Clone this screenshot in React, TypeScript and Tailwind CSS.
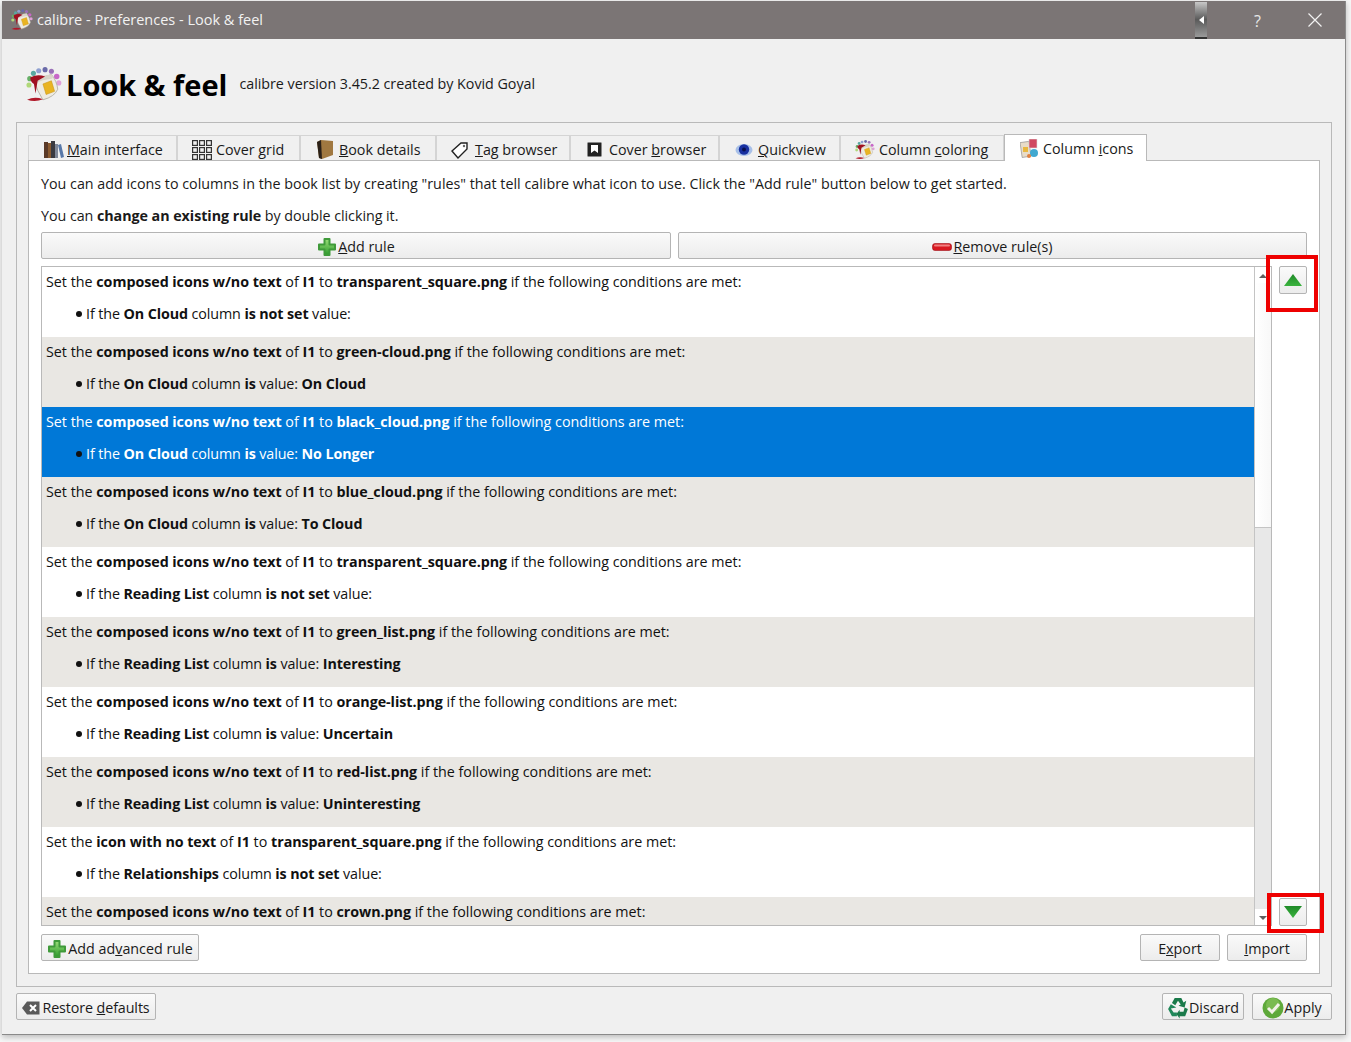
import React from "react";

const Logo = ({ s = 34 }: { s?: number }) => (
  <svg width={s} height={s} viewBox="0 0 34 34" className="shrink-0">
    <circle cx="12" cy="3.5" r="2.4" fill="#8fa0d0" />
    <circle cx="18" cy="2.5" r="2.4" fill="#6a6aa8" />
    <circle cx="24" cy="4" r="2.4" fill="#9a70b8" />
    <circle cx="29" cy="9" r="2.6" fill="#c868c8" />
    <circle cx="31" cy="15" r="2.4" fill="#e0a0d8" />
    <circle cx="7" cy="6" r="2.4" fill="#58a8a0" />
    <circle cx="3.5" cy="11" r="2.4" fill="#68b068" />
    <circle cx="2.8" cy="17" r="2.4" fill="#b0d878" />
    <path d="M8 13 L24 7 Q29 13 30 21 Q27 28 16 31 Q10 22 8 13Z" fill="#eeebe2" stroke="#b0aca0" strokeWidth="0.8" />
    <path d="M8 13 Q15 7 24 7 Q27 10 24 11 Q15 12 10 15Z" fill="#d8d4c8" />
    <path d="M16 16 L24 13 L27 23 L19 26Z" fill="#e9b422" stroke="#c89010" strokeWidth="0.5" />
    <path d="M4 10 Q11 6 18 9 L11 13 L9 25 L7.5 16 Q4 14 4 10Z" fill="#a01020" />
    <path d="M1 31 Q8 27.5 16 30.5 Q9 33.5 1 31Z" fill="#b01828" />
  </svg>
);

const Books = () => (
  <svg width="20" height="18" viewBox="0 0 20 18" className="shrink-0">
    <rect x="0" y="1" width="4" height="16" fill="#5a3a28" />
    <rect x="4" y="2" width="3" height="15" fill="#8a5a30" />
    <rect x="7" y="0" width="4" height="17" fill="#3a3a40" />
    <rect x="11" y="3" width="3" height="14" fill="#808898" />
    <path d="M14 4 L17 3 L20 16 L17 17Z" fill="#5878a8" />
  </svg>
);

const Grid = () => (
  <svg width="20" height="20" viewBox="0 0 20 20" className="shrink-0" fill="none" stroke="#333" strokeWidth="1.2">
    {[0, 7, 14].flatMap((y) =>
      [0, 7, 14].map((x) => <rect key={`${x}-${y}`} x={x + 0.6} y={y + 0.6} width="4.8" height="4.8" />)
    )}
  </svg>
);

const BookIcon = () => (
  <svg width="18" height="20" viewBox="0 0 18 20" className="shrink-0">
    <path d="M1 2 L5 0 L17 1 L17 15 L6 19 L3 18Z" fill="#a07840" />
    <path d="M1 2 L5 0 L6 19 L3 18Z" fill="#2a2018" />
  </svg>
);

const Tag = () => (
  <svg width="18" height="18" viewBox="0 0 18 18" className="shrink-0">
    <path d="M1 10 L10 2 L16 2 L16 8 L7 17Z" fill="#fff" stroke="#222" strokeWidth="1.4" />
    <circle cx="13" cy="5" r="1.2" fill="#666" />
  </svg>
);

const CoverIcon = () => (
  <svg width="16" height="16" viewBox="0 0 16 16" className="shrink-0">
    <rect x="0.5" y="0.5" width="14" height="14" rx="1" fill="#222" stroke="#888" />
    <path d="M4 3 H11 V11 L7.5 8.5 L4 11Z" fill="#fff" />
  </svg>
);

const Eye = () => (
  <svg width="18" height="16" viewBox="0 0 18 16" className="shrink-0">
    <ellipse cx="9" cy="8" rx="8.5" ry="6" fill="#a8c0e8" />
    <circle cx="9" cy="7.5" r="5.2" fill="#1830a0" />
    <circle cx="9" cy="7.5" r="2" fill="#081050" />
  </svg>
);

const ColumnIcons = () => (
  <svg width="20" height="20" viewBox="0 0 20 20" className="shrink-0">
    <rect x="1" y="3" width="9" height="15" fill="#e8dcc8" stroke="#888" strokeWidth="0.6" transform="rotate(-8 5 10)" />
    <rect x="3" y="8" width="5" height="5" fill="#e8b840" />
    <rect x="9" y="0" width="8" height="9" fill="#d04860" stroke="#ddd" strokeWidth="0.6" />
    <circle cx="14" cy="14" r="4" fill="#40a8d0" />
    <circle cx="9" cy="17" r="2" fill="#e08040" />
  </svg>
);

const Plus = () => (
  <svg width="20" height="20" viewBox="0 0 20 20" className="shrink-0">
    <defs>
      <linearGradient id="pg" x1="0" y1="0" x2="0" y2="1">
        <stop offset="0" stopColor="#9ade78" />
        <stop offset="1" stopColor="#2c9a2c" />
      </linearGradient>
    </defs>
    <path d="M7.5 2 H12.5 V7.5 H18 V12.5 H12.5 V18 H7.5 V12.5 H2 V7.5 H7.5Z" fill="url(#pg)" stroke="#3f9a3a" strokeWidth="2" strokeLinejoin="round" />
  </svg>
);

const Minus = () => (
  <svg width="20" height="8" viewBox="0 0 20 8" className="shrink-0">
    <rect x="0.5" y="0.5" width="19" height="7" rx="2.5" fill="#d81820" stroke="#a01018" strokeWidth="0.6" />
    <rect x="2" y="1.5" width="16" height="2" rx="1" fill="#f08080" />
  </svg>
);

const Arrow = ({ up }: { up?: boolean }) => (
  <svg width="18" height="12" viewBox="0 0 18 12">
    <defs>
      <linearGradient id="au" x1="0" y1="0" x2="0" y2="1">
        <stop offset="0" stopColor="#1f8a28" />
        <stop offset="1" stopColor="#3bb43f" />
      </linearGradient>
    </defs>
    <path d={up ? "M9 0 L18 12 H0Z" : "M0 0 H18 L9 12Z"} fill="url(#au)" />
  </svg>
);

const Recycle = () => (
  <svg width="22" height="22" viewBox="0 0 20 20" className="shrink-0">
    <path d="M7 1 H13 L15 5 L17.5 3.5 L16 9.5 L10.5 8 L12.5 6.8 L10 3.5 L7.5 7.5 L4.5 5.5Z" fill="#1a7a4a" />
    <path d="M1 11 L3.5 6.5 L8.5 9.5 L3.5 10.5 L6 14 H9 V17.5 H4.5Z" fill="#20885a" />
    <path d="M19 11 L16.5 17.5 H11.5 V19.5 L8.5 15.5 L11.5 11.5 V13.5 H15 L16 9.5Z" fill="#1a7a4a" />
  </svg>
);

const Check = () => (
  <svg width="22" height="22" viewBox="0 0 22 22" className="shrink-0">
    <circle cx="11" cy="11" r="10.5" fill="#5ea83a" />
    <circle cx="11" cy="8" r="7" fill="#8ec860" opacity="0.6" />
    <path d="M6 11 L10 15 L17 7" fill="none" stroke="#f2f2e8" strokeWidth="3" />
  </svg>
);

const Backspace = () => (
  <svg width="18" height="14" viewBox="0 0 18 14" className="shrink-0">
    <path d="M5 0.5 H17.5 V13.5 H5 L0 7Z" fill="#5a5a5a" />
    <path d="M8 4 L14 10 M14 4 L8 10" stroke="#fff" strokeWidth="2" />
  </svg>
);

const Btn = ({ className = "", children }: { className?: string; children: React.ReactNode }) => (
  <div className={`flex items-center justify-center whitespace-nowrap rounded-[2px] border border-[#b4b4b4] bg-gradient-to-b from-[#fafafa] to-[#ececec] pt-[2px] text-[14.3px] text-[#1a1a1a] ${className}`}>
    {children}
  </div>
);

type TabDef = { icon: React.ReactNode; w: string; gap: string; label: React.ReactNode };
const tabs: TabDef[] = [
  { icon: <Books />, w: "w-[149px]", gap: "gap-[3px] pl-[15px]", label: <><u>M</u>ain interface</> },
  { icon: <Grid />, w: "w-[123px]", gap: "gap-[4px] pl-[14px]", label: <>Cover <u>g</u>rid</> },
  { icon: <BookIcon />, w: "w-[136px]", gap: "gap-[5px] pl-[15px]", label: <><u>B</u>ook details</> },
  { icon: <Tag />, w: "w-[134px]", gap: "gap-[6px] pl-[14px]", label: <><u>T</u>ag browser</> },
  { icon: <CoverIcon />, w: "w-[149px]", gap: "gap-[6px] pl-[16px]", label: <>Cover <u>b</u>rowser</> },
  { icon: <Eye />, w: "w-[121px]", gap: "gap-[5px] pl-[15px]", label: <><u>Q</u>uickview</> },
  { icon: <Logo s={20} />, w: "w-[164px]", gap: "gap-[4px] pl-[14px]", label: <>Column <u>c</u>oloring</> },
];

type Row = { kind: string; file: string; col?: string; cond?: string; val?: string };
const rows: Row[] = [
  { kind: "composed icons w/no text", file: "transparent_square.png", col: "On Cloud", cond: "is not set" },
  { kind: "composed icons w/no text", file: "green-cloud.png", col: "On Cloud", cond: "is", val: "On Cloud" },
  { kind: "composed icons w/no text", file: "black_cloud.png", col: "On Cloud", cond: "is", val: "No Longer" },
  { kind: "composed icons w/no text", file: "blue_cloud.png", col: "On Cloud", cond: "is", val: "To Cloud" },
  { kind: "composed icons w/no text", file: "transparent_square.png", col: "Reading List", cond: "is not set" },
  { kind: "composed icons w/no text", file: "green_list.png", col: "Reading List", cond: "is", val: "Interesting" },
  { kind: "composed icons w/no text", file: "orange-list.png", col: "Reading List", cond: "is", val: "Uncertain" },
  { kind: "composed icons w/no text", file: "red-list.png", col: "Reading List", cond: "is", val: "Uninteresting" },
  { kind: "icon with no text", file: "transparent_square.png", col: "Relationships", cond: "is not set" },
  { kind: "composed icons w/no text", file: "crown.png" },
];

const RuleRow = ({ r, i }: { r: Row; i: number }) => {
  const sel = i === 2;
  const bg = sel ? "bg-[#0078d7] text-white" : i % 2 === 1 ? "bg-[#e9e7e3] text-[#111]" : "bg-white text-[#111]";
  return (
    <div className={`shrink-0 pl-[4px] pt-[5px] ${r.col ? "h-[70px]" : "flex-1"} ${bg}`}>
      <div className="h-[20px] leading-[20px] whitespace-nowrap">
        Set the <b className="tracking-[-0.05px]">{r.kind}</b> of <b>I1</b> to <b className="tracking-[-0.05px]">{r.file}</b> if the following conditions are met:
      </div>
      {r.col && (
        <div className="mt-[12px] flex h-[20px] items-center whitespace-nowrap pl-[30px] leading-[20px]">
          <span className="mr-[4px] h-[6px] w-[6px] rounded-full bg-[#111]" />
          <span className="tracking-[-0.1px]">
            If the <b>{r.col}</b> column <b>{r.cond}</b> value:{r.val ? <> <b>{r.val}</b></> : null}
          </span>
        </div>
      )}
    </div>
  );
};

export default function App() {
  return (
    <div className="relative h-[1042px] w-[1351px] overflow-hidden bg-[#f6f6f6] pl-[2px] pt-[1px] text-[14.3px] text-[#1a1a1a] [font-family:'Open_Sans','Noto_Sans',sans-serif]">
      <div className="h-[1034px] w-[1344px] border-b border-r border-[#8a8a8a] bg-[#f0f0f0] shadow-[0_2px_6px_rgba(0,0,0,0.25)]">
        {/* title bar */}
        <div className="relative flex h-[38px] items-center bg-[#7b7575] pl-[9px] text-[14.5px] text-[#f2f2f2]">
          <Logo s={22} />
          <span className="ml-[4px]">calibre - Preferences - Look &amp; feel</span>
          <div className="absolute left-[1193px] top-[1px] flex h-[37px] w-[12px] items-center justify-center border-b-2 border-[#333] bg-gradient-to-b from-[#c8c8c8] via-[#5a5a5a] to-[#9a9a9a]">
            <span className="h-0 w-0 border-y-[4px] border-r-[5px] border-y-transparent border-r-white" />
          </div>
          <span className="absolute left-[1252px] top-[8px] text-[16px] text-[#e8e8e8]">?</span>
          <svg width="14" height="14" viewBox="0 0 14 14" className="absolute left-[1306px] top-[12px]">
            <path d="M0.5 0.5 L13.5 13.5 M13.5 0.5 L0.5 13.5" stroke="#f2f2f2" strokeWidth="1.2" />
          </svg>
        </div>

        {/* header */}
        <div className="flex h-[83px] items-center pl-[24px] pt-[8px]">
          <Logo s={36} />
          <span className="ml-[4px] text-[29px] font-bold text-black">Look &amp; feel</span>
          <span className="ml-[12px] mt-[-1px] tracking-[-0.03px]">calibre version 3.45.2 created by Kovid Goyal</span>
        </div>

        {/* outer panel */}
        <div className="ml-[14px] h-[865px] w-[1316px] border border-[#b9b9b9] px-[11px] pt-[10px]">
          <div className="flex h-[27px] items-end">
            {tabs.map((t, i) => (
              <div key={i} className={`flex h-[25px] ${t.w} ${t.gap} shrink-0 items-center border border-b-0 border-[#d4d4d4] bg-[#f0f0f0] pt-[4px]`}>
                {t.icon}
                <span className="whitespace-nowrap">{t.label}</span>
              </div>
            ))}
            <div className="relative top-[1px] z-10 flex h-[27px] w-[143px] shrink-0 items-center gap-[3px] border border-b-0 border-[#b9b9b9] bg-white pl-[15px] pt-[2px]">
              <ColumnIcons />
              <span className="whitespace-nowrap">Column <u>i</u>cons</span>
            </div>
          </div>

          {/* pane */}
          <div className="h-[814px] w-[1292px] border border-[#b9b9b9] bg-white pl-[12px]">
            <div className="mt-[13px] h-[20px] whitespace-nowrap leading-[20px]">You can add icons to columns in the book list by creating "rules" that tell calibre what icon to use. Click the "Add rule" button below to get started.</div>
            <div className="mt-[12px] h-[20px] leading-[20px] tracking-[-0.05px]">You can <b>change an existing rule</b> by double clicking it.</div>

            <div className="mt-[6px] flex gap-[7px]">
              <Btn className="h-[27px] w-[630px]"><Plus /><span className="ml-[1px]"><u>A</u>dd rule</span></Btn>
              <Btn className="h-[27px] w-[629px]"><Minus /><span className="ml-[1px]"><u>R</u>emove rule(s)</span></Btn>
            </div>

            <div className="mt-[7px] flex">
              <div className="flex h-[660px] w-[1231px] border border-[#b9b9b9] bg-white">
                <div className="flex w-[1212px] flex-col overflow-hidden">
                  {rows.map((r, i) => <RuleRow key={i} r={r} i={i} />)}
                </div>
                <div className="flex w-[17px] flex-col border-l border-[#c4c4c4] bg-[#e8e8e8]">
                  <div className="h-[16px] bg-white pl-[4px] pt-[7px]">
                    <div className="h-0 w-0 border-x-[4px] border-b-[4px] border-x-transparent border-b-[#606060]" />
                  </div>
                  <div className="h-[245px] border-b border-[#c4c4c4] bg-gradient-to-r from-white to-[#f8f8f8]" />
                  <div className="flex-1" />
                  <div className="h-[16px] bg-white pl-[4px] pt-[7px]">
                    <div className="h-0 w-0 border-x-[4px] border-t-[4px] border-x-transparent border-t-[#606060]" />
                  </div>
                </div>
              </div>
              <div className="ml-[7px] flex h-[660px] flex-col justify-between">
                <Btn className="h-[28px] w-[28px] !pt-0"><Arrow up /></Btn>
                <Btn className="h-[28px] w-[28px] !pt-0"><Arrow /></Btn>
              </div>
            </div>

            <div className="mt-[8px] flex w-[1266px] items-center">
              <Btn className="h-[27px] w-[158px]"><Plus /><span className="ml-[1px]">Add ad<u>v</u>anced rule</span></Btn>
              <div className="flex-1" />
              <Btn className="h-[27px] w-[80px]"><span>E<u>x</u>port</span></Btn>
              <Btn className="ml-[7px] h-[27px] w-[80px]"><span><u>I</u>mport</span></Btn>
            </div>
          </div>
        </div>

        {/* footer */}
        <div className="mt-[6px] flex w-[1330px] items-center pl-[14px]">
          <Btn className="h-[27px] w-[140px]"><Backspace /><span className="ml-[2px] tracking-[-0.1px]">Restore <u>d</u>efaults</span></Btn>
          <div className="flex-1" />
          <Btn className="h-[27px] w-[82px]"><Recycle /><span>Discard</span></Btn>
          <Btn className="ml-[8px] h-[27px] w-[80px] border-[#7fb6d8] from-[#eaf5fb] to-[#d5e9f5]"><Check /><span>Apply</span></Btn>
        </div>
      </div>

      {/* red annotation boxes */}
      <div className="absolute left-[1266px] top-[255px] h-[57px] w-[52px] border-[4px] border-[#ee0000]" />
      <div className="absolute left-[1267px] top-[893px] h-[40px] w-[57px] border-[4px] border-[#ee0000]" />
    </div>
  );
}
